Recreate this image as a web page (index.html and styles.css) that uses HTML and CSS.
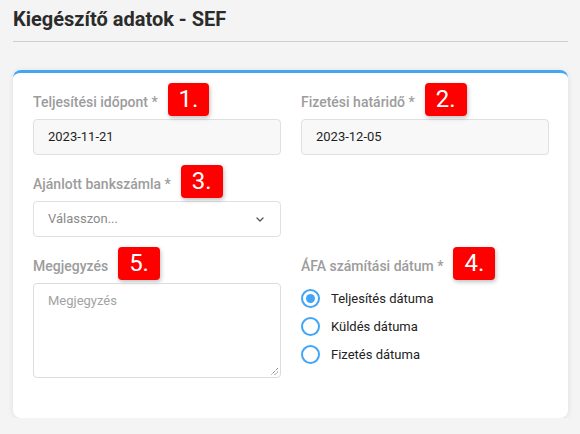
FILE: index.html
```html
<!DOCTYPE html>
<html lang="hu">
<head>
<meta charset="utf-8">
<title>Kiegészítő adatok - SEF</title>
<link rel="stylesheet" href="styles.css">
</head>
<body>
<h1 class="page-title">Kiegészítő adatok - SEF</h1>
<div class="card">
  <div class="form-grid">
    <div class="group">
      <div class="label-row"><span class="label">Teljesítési időpont *</span><span class="badge">1.</span></div>
      <div class="input filled">2023-11-21</div>
    </div>
    <div class="group">
      <div class="label-row"><span class="label">Fizetési határidő *</span><span class="badge">2.</span></div>
      <div class="input filled">2023-12-05</div>
    </div>
    <div class="group">
      <div class="label-row"><span class="label">Ajánlott bankszámla *</span><span class="badge">3.</span></div>
      <div class="input select"><span class="placeholder">Válasszon...</span>
        <svg class="chevron" width="8" height="5" viewBox="0 0 8 5"><path d="M1 1l3 3 3-3" fill="none" stroke="#555" stroke-width="1.3" stroke-linecap="round" stroke-linejoin="round"/></svg>
      </div>
    </div>
    <div class="group empty"></div>
    <div class="group">
      <div class="label-row"><span class="label">Megjegyzés</span><span class="badge">5.</span></div>
      <div class="textarea"><span class="placeholder light">Megjegyzés</span>
        <svg class="grip" width="9" height="9" viewBox="0 0 9 9"><path d="M8 1L1 8M8 4.5L4.5 8" stroke="#555" stroke-width="1" stroke-dasharray="1 1"/></svg>
      </div>
    </div>
    <div class="group">
      <div class="label-row"><span class="label">ÁFA számítási dátum *</span><span class="badge">4.</span></div>
      <ul class="radios">
        <li class="radio checked"><span class="circle"></span>Teljesítés dátuma</li>
        <li class="radio"><span class="circle"></span>Küldés dátuma</li>
        <li class="radio"><span class="circle"></span>Fizetés dátuma</li>
      </ul>
    </div>
  </div>
</div>
</body>
</html>
```
FILE: styles.css
```css
* { box-sizing: border-box; }
html, body { margin: 0; }
body {
  background: #f4f4f4;
  font-family: Roboto, "Noto Sans", Arial, sans-serif;
  padding: 7px 12px 0 13px;
  color: #222;
}
.page-title {
  margin: 0;
  font-size: 20px;
  line-height: 24px;
  font-weight: 700;
  color: #2b2b2b;
  padding-bottom: 10px;
  border-bottom: 1px solid #cfcfcf;
}
.card {
  margin-top: 28px;
  background: #fff;
  border-top: 3px solid #42a5f5;
  border-radius: 8px;
  box-shadow: 0 1px 6px rgba(0,0,0,0.09);
  padding: 10px 19px 40px 20px;
}
.form-grid {
  display: grid;
  grid-template-columns: 248px 248px;
  column-gap: 20px;
  row-gap: 10px;
}
.label-row {
  display: flex;
  align-items: baseline;
  height: 33px;
  margin-bottom: 3px;
}
.label {
  font-size: 14px;
  font-weight: 500;
  color: #9c9c9c;
}
.badge {
  margin-left: 10px;
  background: #ff0000;
  color: #fff;
  font-size: 24px;
  line-height: 33px;
  height: 33px;
  padding: 0 11px;
  border-radius: 4px;
  box-shadow: 1px 2px 4px rgba(0,0,0,0.25);
}
.input {
  height: 36px;
  border: 1px solid #e0e0e0;
  border-radius: 4px;
  padding: 0 14px;
  font-size: 13px;
  line-height: 34px;
  display: flex;
  align-items: center;
}
.input.filled { background: #f8f8f8; color: #1f1f1f; }
.input.select { background: #fff; justify-content: space-between; padding-right: 16px; }
.placeholder { color: #8a8a8a; font-size: 13px; }
.placeholder.light { color: #a3a3a3; }
.chevron { display: block; }
.textarea {
  position: relative;
  height: 95px;
  border: 1px solid #dcdcdc;
  border-radius: 4px;
  padding: 8px 14px;
  font-size: 13px;
  line-height: 18px;
}
.grip { position: absolute; right: 1px; bottom: 1px; }
.radios { list-style: none; margin: 0; padding: 1px 0 0; }
.radio {
  display: flex;
  align-items: center;
  height: 28px;
  font-size: 13px;
  color: #222;
}
.circle {
  width: 19px;
  height: 19px;
  border: 2px solid #42a5f5;
  border-radius: 50%;
  margin-right: 11px;
  display: flex;
  align-items: center;
  justify-content: center;
}
.radio.checked .circle::after {
  content: "";
  width: 9px;
  height: 9px;
  border-radius: 50%;
  background: #42a5f5;
}
```
